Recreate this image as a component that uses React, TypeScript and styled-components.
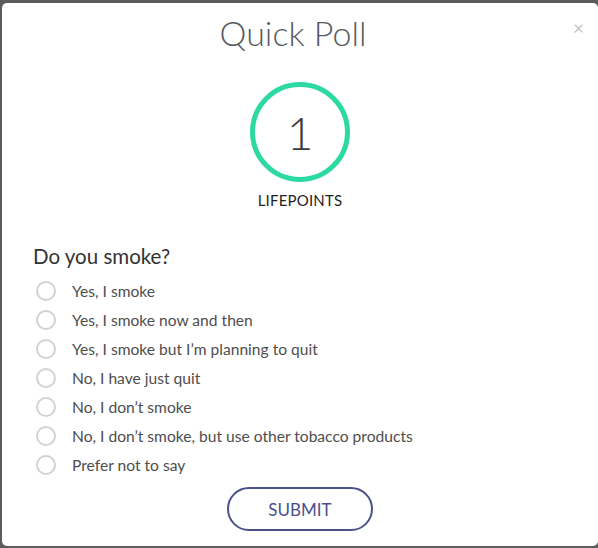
import React, { useState } from "react";
import styled, { createGlobalStyle } from "styled-components";

const Global = createGlobalStyle`
  html, body {
    margin: 0;
    padding: 0;
    background: #5c5c5c;
    font-family: Lato, "Open Sans", sans-serif;
  }
  #root { padding: 3px 0 0 2px; }
`;

const Modal = styled.div`
  position: relative;
  box-sizing: border-box;
  width: 596px;
  height: 543px;
  background: #ffffff;
  border-radius: 5px;
  padding: 8px 0 0 0;
  display: flex;
  flex-direction: column;
`;

const Title = styled.h1`
  margin: 0;
  font-family: Lato, sans-serif;
  font-weight: 300;
  font-size: 34px;
  line-height: 44px;
  color: #555a5f;
  text-align: center;
  padding-right: 14px;
`;

const Close = styled.button`
  position: absolute;
  top: 15px;
  right: 14px;
  border: 0;
  background: none;
  color: #c4c4c4;
  font-family: Lato, sans-serif;
  font-size: 19px;
  line-height: 19px;
  padding: 0;
  cursor: pointer;
`;

const Badge = styled.div`
  display: flex;
  flex-direction: column;
  align-items: center;
  margin-top: 27px;
`;

const Ring = styled.div`
  box-sizing: border-box;
  width: 100px;
  height: 100px;
  border-radius: 50%;
  border: 5px solid #2cd9a3;
  display: flex;
  align-items: center;
  justify-content: center;
  font-family: Lato, sans-serif;
  font-weight: 300;
  font-size: 46px;
  color: #3c3c3c;
`;

const BadgeLabel = styled.div`
  margin-top: 8px;
  font-family: Lato, sans-serif;
  font-size: 15px;
  line-height: 20px;
  color: #1f1f1f;
  letter-spacing: 0.2px;
`;

const Question = styled.h2`
  margin: 32px 0 0 31px;
  font-family: Lato, sans-serif;
  font-weight: 400;
  font-size: 20.5px;
  line-height: 28px;
  color: #333;
`;

const Options = styled.div`
  margin: 6px 0 0 34px;
  display: flex;
  flex-direction: column;
`;

const Option = styled.label`
  display: flex;
  align-items: center;
  height: 29px;
  gap: 16px;
  font-family: Lato, sans-serif;
  font-size: 15.6px;
  color: #4e4e4e;
  cursor: pointer;
`;

const Radio = styled.span<{ $checked: boolean }>`
  box-sizing: border-box;
  width: 20px;
  height: 20px;
  border-radius: 50%;
  border: 2px solid #d2d2d2;
  background: ${(p) => (p.$checked ? "radial-gradient(circle, #4b5089 0 4px, #fff 5px)" : "#fff")};
  flex: none;
`;

const Submit = styled.button`
  align-self: center;
  margin-top: 8px;
  width: 146px;
  height: 44px;
  border: 2px solid #4b5089;
  border-radius: 22px;
  background: #fff;
  color: #4b5089;
  font-family: Lato, sans-serif;
  font-size: 17px;
  cursor: pointer;
`;

const options = [
  "Yes, I smoke",
  "Yes, I smoke now and then",
  "Yes, I smoke but I’m planning to quit",
  "No, I have just quit",
  "No, I don’t smoke",
  "No, I don’t smoke, but use other tobacco products",
  "Prefer not to say",
];

export default function App() {
  const [sel, setSel] = useState<number | null>(null);
  return (
    <>
      <Global />
      <Modal>
        <Close aria-label="close">×</Close>
        <Title>Quick Poll</Title>
        <Badge>
          <Ring>1</Ring>
          <BadgeLabel>LIFEPOINTS</BadgeLabel>
        </Badge>
        <Question>Do you smoke?</Question>
        <Options>
          {options.map((o, i) => (
            <Option key={o} onClick={() => setSel(i)}>
              <Radio $checked={sel === i} />
              {o}
            </Option>
          ))}
        </Options>
        <Submit>SUBMIT</Submit>
      </Modal>
    </>
  );
}
